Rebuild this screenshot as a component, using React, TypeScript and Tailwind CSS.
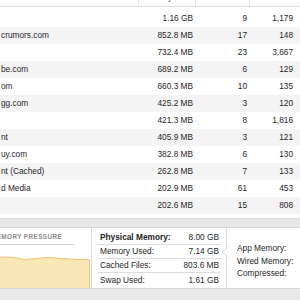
import React from 'react'

const rows = [
  { name: '', mem: '1.16 GB', threads: '9', ports: '1,179' },
  { name: 'crumors.com', mem: '852.8 MB', threads: '17', ports: '148' },
  { name: '', mem: '732.4 MB', threads: '23', ports: '3,667' },
  { name: 'be.com', mem: '689.2 MB', threads: '6', ports: '129' },
  { name: 'om', mem: '660.3 MB', threads: '10', ports: '135' },
  { name: 'gg.com', mem: '425.2 MB', threads: '3', ports: '120' },
  { name: '', mem: '421.3 MB', threads: '8', ports: '1,816' },
  { name: 'nt', mem: '405.9 MB', threads: '3', ports: '121' },
  { name: 'uy.com', mem: '382.8 MB', threads: '6', ports: '130' },
  { name: 'nt (Cached)', mem: '262.8 MB', threads: '7', ports: '133' },
  { name: 'd Media', mem: '202.9 MB', threads: '61', ports: '453' },
  { name: '', mem: '202.6 MB', threads: '15', ports: '808' },
]

const stats = [
  { label: 'Physical Memory:', value: '8.00 GB', strong: true },
  { label: 'Memory Used:', value: '7.14 GB' },
  { label: 'Cached Files:', value: '803.6 MB' },
  { label: 'Swap Used:', value: '1.61 GB' },
]

const PressureChart = () => (
  <svg className="block w-[90px] h-[34px]" viewBox="0 0 90 34" preserveAspectRatio="none">
    <polygon
      points="0,3 8,3.2 14,3.6 20,4.6 24,5.6 28,5.2 34,4.8 40,4.2 44,3.8 48,3.4 54,3.8 60,4.6 66,4.8 72,5.2 80,5.6 86,5.6 89.5,5.8 89.5,34 0,34"
      fill="#f9e7b6"
    />
    <polyline
      points="0,3 8,3.2 14,3.6 20,4.6 24,5.6 28,5.2 34,4.8 40,4.2 44,3.8 48,3.4 54,3.8 60,4.6 66,4.8 72,5.2 80,5.6 86,5.6 89.5,5.8 89.5,34"
      fill="none"
      stroke="#eec27a"
      strokeWidth="1"
    />
  </svg>
)

export default function App() {
  return (
    <div className="w-[300px] h-[300px] overflow-hidden bg-white text-[#262626] text-[8.3px] leading-none" style={{ fontFamily: '"Liberation Sans", Arial, sans-serif' }}>
      {/* header, mostly scrolled off the top */}
      <div className="flex h-[18px] -mt-[11px] border-b border-[#dedede] text-[#555]">
        <div className="w-[143px] flex items-center -ml-[4px] border-r border-[#e2e2e2]">Process Name</div>
        <div className="w-[57px] flex items-center justify-end pr-[23px] border-r border-[#e2e2e2]">Memory</div>
        <div className="w-[54px] flex items-center justify-end pr-[17px] border-r border-[#e2e2e2]">Threads</div>
        <div className="w-[46px] flex items-center justify-end pr-[13px]">Ports</div>
      </div>

      <div className="pt-[3px]">
        {rows.map((r, i) => (
          <div key={i} className={`flex h-[17px] items-center ${i % 2 === 1 ? 'bg-[#f4f4f4]' : 'bg-white'}`}>
            <div className="w-[143px] pl-[1px] whitespace-nowrap">{r.name}</div>
            <div className="w-[57px] text-right pr-[7px]">{r.mem}</div>
            <div className="w-[54px] text-right pr-[7px]">{r.threads}</div>
            <div className="w-[46px] text-right pr-[7px]">{r.ports}</div>
          </div>
        ))}
      </div>

      {/* bottom memory panel */}
      <div className="mt-[4px] bg-[#e8e8e8] border-t border-[#dadada] pt-[8px] h-[90px]">
        <div className="flex h-[62px] bg-white border-y border-[#d6d6d6]">
          <div className="w-[92px] flex flex-col border-r border-[#d9d9d9]">
            <div className="w-[84px] h-[17px] flex items-end pb-[4px] border-b border-[#d4d4d4] text-[6.4px] font-bold tracking-[0.06em] text-[#8a8a8a] -ml-[9px]">
              MEMORY PRESSURE
            </div>
            <div className="mt-auto">
              <PressureChart />
            </div>
          </div>

          <div className="w-[135px] pl-[6px] pr-[5px] pt-[3px] border-r border-[#d9d9d9]">
            {stats.map((s, i) => (
              <div key={i} className={`flex justify-between items-center h-[14px] px-[2px] ${i < 3 ? 'border-b border-[#dcdcdc]' : ''} ${s.strong ? 'font-bold text-[#1e1e1e]' : ''}`}>
                <span>{s.label}</span>
                <span className="font-normal">{s.value}</span>
              </div>
            ))}
          </div>

          <div className="relative flex-1 pl-[10px] pt-[16px] flex flex-col gap-[4.4px]">
            <svg className="absolute -left-[6px] top-[19px] w-[7px] h-[10px]" viewBox="0 0 7 10">
              <polygon points="7,0 1,5 7,10" fill="white" />
              <polyline points="7,0 1,5 7,10" fill="none" stroke="#d9d9d9" strokeWidth="1" />
            </svg>
            <div>App Memory:</div>
            <div>Wired Memory:</div>
            <div>Compressed:</div>
          </div>
        </div>
      </div>
    </div>
  )
}
